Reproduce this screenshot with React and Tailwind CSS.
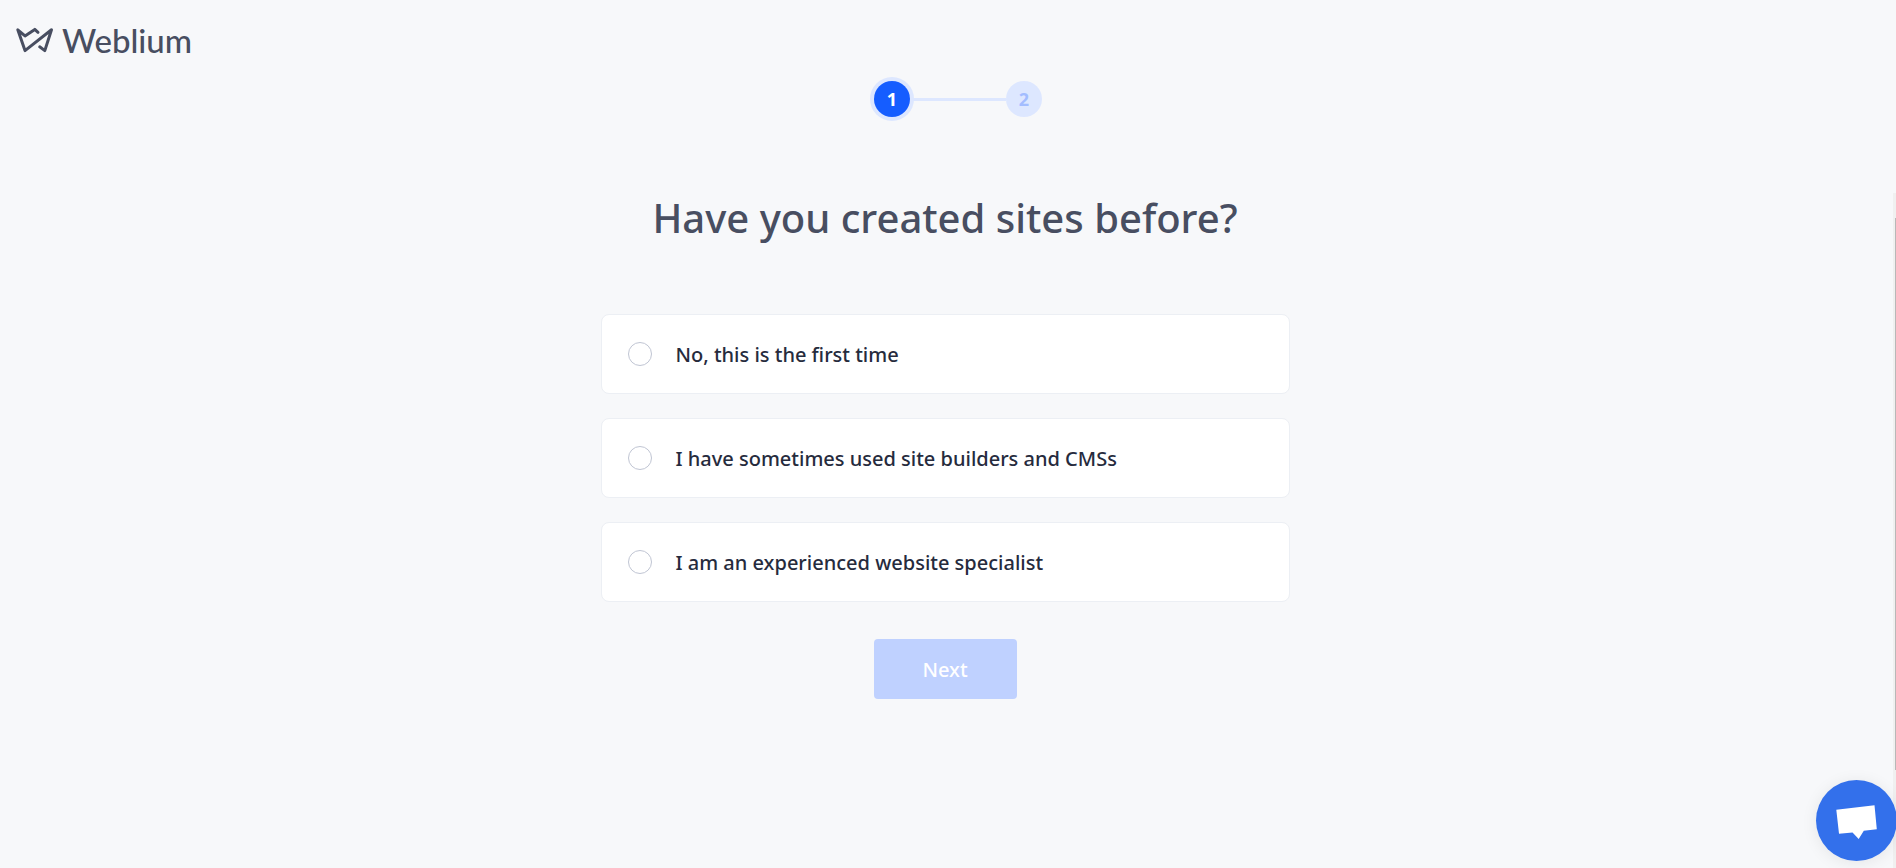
import React, { useState } from "react";

const OPTIONS = [
  { id: "first", label: "No, this is the first time" },
  { id: "sometimes", label: "I have sometimes used site builders and CMSs" },
  { id: "expert", label: "I am an experienced website specialist" },
];

function Logo() {
  return (
    <a href="#" className="flex items-center gap-2 text-[#484e61]">
      <svg width="38" height="26" viewBox="0 0 38 26" fill="none" stroke="currentColor" strokeWidth="3" strokeLinecap="round" strokeLinejoin="round">
        <path d="M22 5.3 L18.8 2.4 L9 8.9 L1.8 2.8 L9 23.6 L35.5 2.8 L28.8 23.6 L23.7 19.8" />
      </svg>
      <span className="font-['Lato',sans-serif] text-[33px] leading-10 font-medium">Weblium</span>
    </a>
  );
}

function Steps() {
  return (
    <div className="flex items-center justify-center pl-[26px] text-lg font-bold">
      <div className="z-10 flex h-9 w-9 items-center justify-center rounded-full bg-[#155dff] text-white ring-4 ring-[#dde7ff]">
        1
      </div>
      <div className="h-[3px] w-24 bg-[#dde7ff]" />
      <div className="flex h-9 w-9 items-center justify-center rounded-full bg-[#dde7ff] text-[#a3bdff]">
        2
      </div>
    </div>
  );
}

export default function App() {
  const [answer, setAnswer] = useState("");

  return (
    <div className="relative min-h-screen bg-[#f7f8fa] pr-[6px] font-['Noto_Sans','Open_Sans',sans-serif] text-[#262b3d]">
      <header className="px-4 pt-5">
        <Logo />
      </header>

      <main className="px-4 pt-[21px]">
        <Steps />

        <h1 className="pt-[69px] text-center text-[40px] leading-[64px] font-medium text-[#484e61]">
          Have you created sites before?
        </h1>

        <form className="mx-auto flex max-w-[689px] flex-col items-center pt-16">
          <div className="flex w-full flex-col gap-6">
            {OPTIONS.map((o) => (
              <label
                key={o.id}
                htmlFor={o.id}
                className="flex h-20 items-center gap-6 rounded-lg border border-[#eceff4] bg-white px-[26px] text-xl font-medium"
              >
                <input
                  id={o.id}
                  type="radio"
                  name="experience"
                  value={o.id}
                  checked={answer === o.id}
                  onChange={(e) => setAnswer(e.target.value)}
                  className="h-6 w-6 appearance-none rounded-full border border-[#c0c5d3] bg-white checked:border-8 checked:border-[#155dff]"
                />
                <span className="pt-[2px]">{o.label}</span>
              </label>
            ))}
          </div>
          <button
            type="button"
            disabled={!answer}
            className="mt-[37px] h-[60px] w-[143px] rounded bg-[#155dff] pt-[2px] text-xl font-medium text-white disabled:bg-[#bfd1ff]"
          >
            Next
          </button>
        </form>
      </main>

      {/* scrollbar */}
      <div className="absolute right-0 top-[193px] bottom-0 flex w-[3px] justify-end bg-[#f0f0f0] pt-[25px] pb-[98px]">
        <div className="w-px bg-[#b8b8b8]" />
      </div>

      {/* chat */}
      <button
        type="button"
        aria-label="Chat"
        className="fixed -right-px bottom-[7px] flex h-[81px] w-[81px] items-center justify-center rounded-full bg-[#3370eb] shadow-[0_2px_16px_rgba(0,0,0,0.08)]"
      >
        <svg width="81" height="81" viewBox="0 0 81 81" fill="white">
          <path d="M20.3 29.7 L58.5 25.2 L60.8 49.3 L47.8 50.8 L42.7 59 L36.5 52.4 L23 53.7 Z" />
        </svg>
      </button>
    </div>
  );
}
